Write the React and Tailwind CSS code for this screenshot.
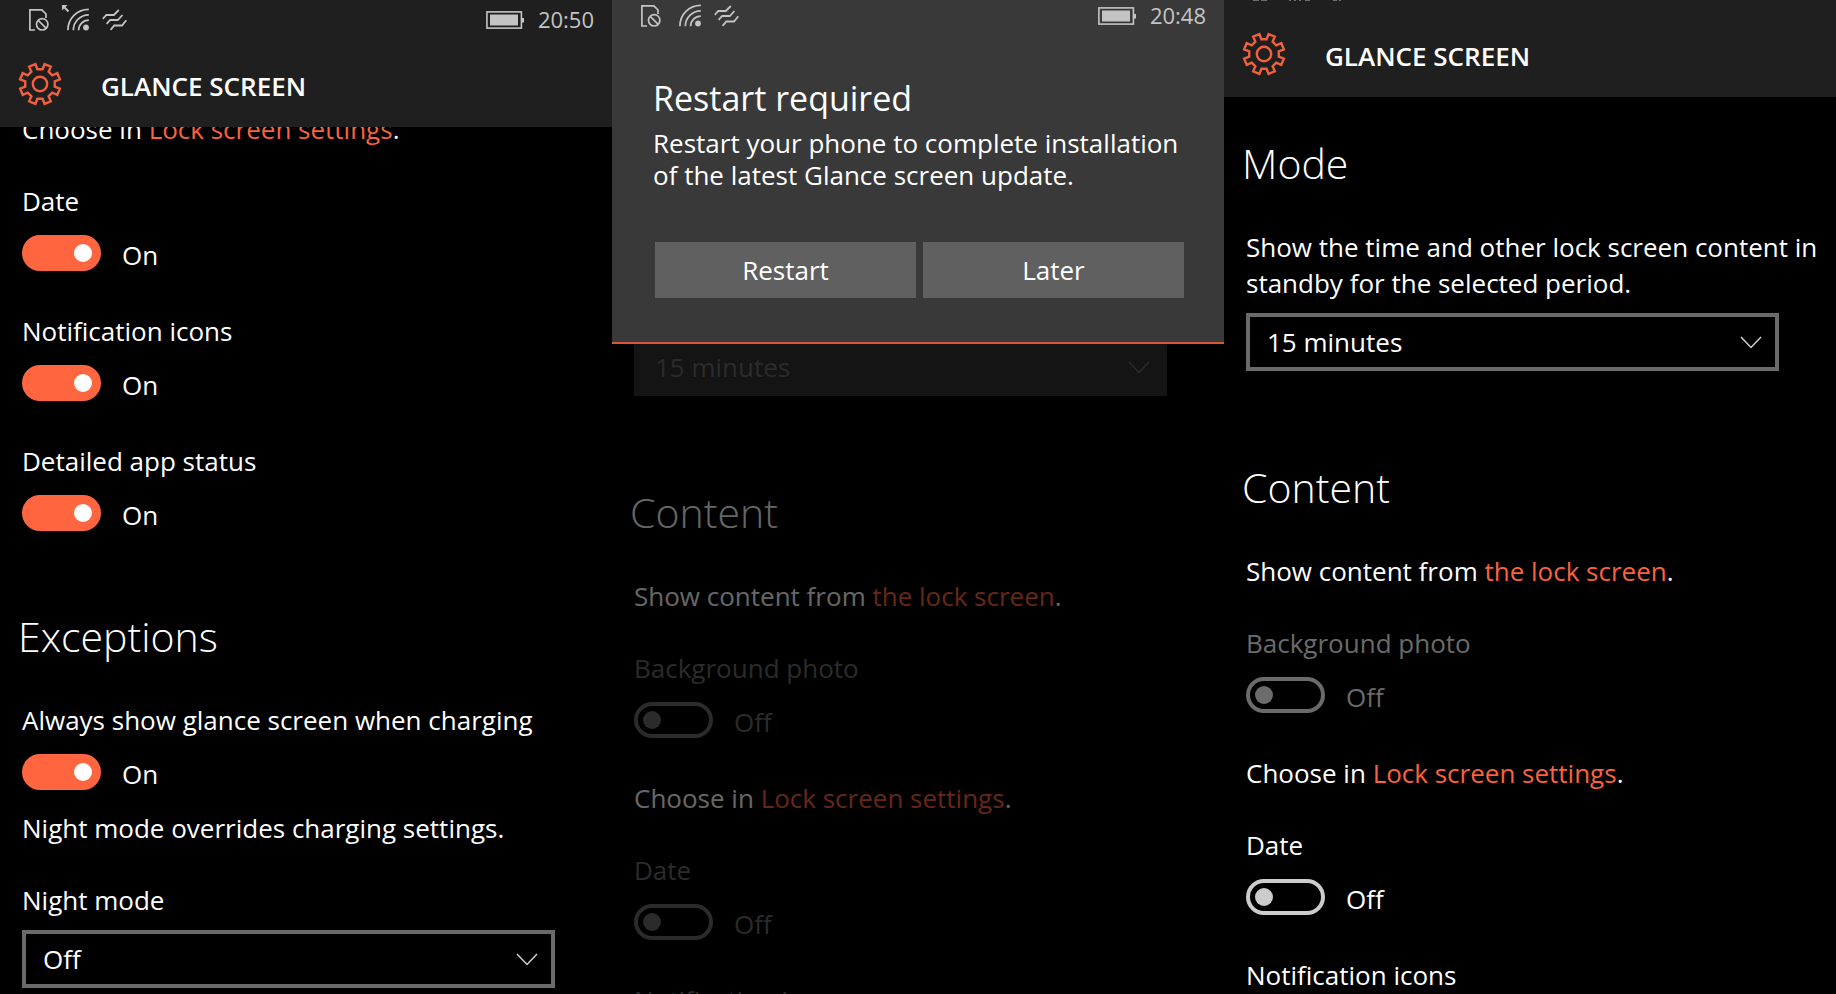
import { useState, useId } from 'react';

// Eight-tooth outline, built around the centre of a 44x44 box
const gearPath = (() => {
    const points = [];
    for (let i = 0; i < 8; i++) {
        [[20.4, -13], [15, -10], [15, 10], [20.4, 13]].forEach(([r, offset]) => {
            const angle = ((i * 45 + offset - 90) * Math.PI) / 180;
            points.push(`${(22 + r * Math.cos(angle)).toFixed(2)} ${(22 + r * Math.sin(angle)).toFixed(2)}`);
        });
    }
    return `M${points.join('L')}Z`;
})();

const GearIcon = () => (
    <svg viewBox="0 0 44 44" className="w-11 h-11 shrink-0" fill="none" stroke="#f0603c" strokeWidth="2.4" aria-hidden="true">
        <path d={gearPath} />
        <circle cx="22" cy="22" r="7.2" />
    </svg>
);

const SimIcon = () => (
    <svg viewBox="0 0 22 24" className="w-[22px] h-6" fill="none" stroke="currentColor" strokeWidth="1.7" aria-hidden="true">
        <path d="M7 22H1.9V1.9h12L18 6v4" />
        <circle cx="14.2" cy="16.3" r="5.7" />
        <path d="M10.2 12.3l8 8" />
    </svg>
);

const WifiIcon = ({ searching }) => (
    <svg viewBox="0 0 30 28" className="w-[30px] h-7" fill="none" stroke="currentColor" strokeWidth="1.7" aria-hidden="true">
        {searching && (
            <>
                <path d="M2.5 2.5l5 5" strokeWidth="2" />
                <path d="M1 1h5.5L1 6.5z" fill="currentColor" stroke="none" />
            </>
        )}
        <path d="M6.9 26.3C6.9 14.5 16 5.4 27.8 5.4" />
        <path d="M12.3 26.3c0-8.5 7-15.5 15.5-15.5" />
        <path d="M17.6 26.3c0-5.6 4.6-10.2 10.2-10.2" />
        <circle cx="25" cy="23.5" r="2.9" fill="currentColor" stroke="none" />
    </svg>
);

const VibrateIcon = () => (
    <svg viewBox="0 0 26 24" className="w-[26px] h-6" fill="none" stroke="currentColor" strokeWidth="1.8" aria-hidden="true">
        <path d="M.8 10.8L4.300 7h7.500L16.800 2" />
        <path d="M4.600 15.800L8.200 12h7.600l4.700-5" />
        <path d="M8.600 21.800l3.700-4.300H20l4.300-5.200" />
    </svg>
);

const BatteryIcon = () => (
    <svg viewBox="0 0 38 18" className="w-[38px] h-[18px]" fill="none" aria-hidden="true">
        <rect x="0.9" y="0.9" width="34.5" height="16.2" stroke="currentColor" strokeWidth="1.6" />
        <rect x="4" y="3.5" width="28" height="11" fill="currentColor" />
        <rect x="36" y="7" width="2" height="4.5" fill="currentColor" />
    </svg>
);

const ChevronIcon = () => (
    <svg viewBox="0 0 22 13" className="absolute right-[17px] top-1/2 -mt-1.5 w-[22px] h-[13px] pointer-events-none" fill="none" stroke="currentColor" strokeWidth="1.5" aria-hidden="true">
        <path d="M1 1l10 10.5L21 1" />
    </svg>
);

const StatusBar = ({ time, searching }) => (
    <div className="h-10 pl-7 pr-[18px] flex items-center justify-between text-[#c4c4c4]">
        <div className="flex items-center">
            <SimIcon />
            <div className="mx-[11px] pb-1">
                <WifiIcon searching={searching} />
            </div>
            <VibrateIcon />
        </div>
        <div className="flex items-center gap-[14px]">
            <BatteryIcon />
            <span className="text-[22px] leading-6 pb-0.5">{time}</span>
        </div>
    </div>
);

const TitleBar = () => (
    <div className="h-[87px] pl-[18px] flex items-center gap-[39px]">
        <GearIcon />
        <h1 className="pt-1 text-[26px] leading-9 font-semibold">GLANCE SCREEN</h1>
    </div>
);

const Heading = ({ children }) => (
    <h2 className="-ml-1 text-[41px] leading-[60px] font-light">{children}</h2>
);

const Toggle = ({ label, defaultOn = false, disabled = false }) => {
    const id = useId();
    const [on, setOn] = useState(defaultOn);

    return (
        <div className={disabled ? 'text-[#6b6b6b]' : ''}>
            <label htmlFor={id} className="block">{label}</label>
            <div className="mt-4 h-10 flex items-start gap-[21px]">
                <input
                    id={id}
                    type="checkbox"
                    checked={on}
                    disabled={disabled}
                    onChange={(e) => setOn(e.target.checked)}
                    className="appearance-none shrink-0 w-[79px] h-9 px-[5px] flex items-center rounded-full border-4 border-[#cccccc] text-[#cccccc] before:content-[''] before:w-[18px] before:h-[18px] before:rounded-full before:bg-current checked:justify-end checked:border-[#ff6640] checked:bg-[#ff6640] checked:text-white disabled:border-[#6b6b6b] disabled:text-[#6b6b6b]"
                />
                <span className="leading-10">{on ? 'On' : 'Off'}</span>
            </div>
        </div>
    );
};

const SelectBox = ({ label, options, disabled = false }) => (
    <div className={disabled ? 'relative mr-[45px] text-[#6b6b6b]' : 'relative mr-[45px] text-[#d0d0d0]'}>
        <select
            aria-label={label}
            disabled={disabled}
            className="appearance-none block w-full h-[58px] pl-[17px] pr-12 border-4 border-[#6a6a6a] bg-black text-white disabled:border-[#333333] disabled:bg-[#333333] disabled:text-[#6b6b6b] disabled:opacity-100"
        >
            {options.map(option => (
                <option key={option}>{option}</option>
            ))}
        </select>
        <ChevronIcon />
    </div>
);

const SettingsLink = ({ children }) => (
    <a href="#lock-screen" className="text-[#f9633e]">{children}</a>
);

const ContentSection = ({ dateDisabled = false }) => (
    <>
        <Heading>Content</Heading>
        <p className="mt-9">Show content from <SettingsLink>the lock screen</SettingsLink>.</p>
        <div className="mt-9">
            <Toggle label="Background photo" disabled />
        </div>
        <p className="mt-[38px]">Choose in <SettingsLink>Lock screen settings</SettingsLink>.</p>
        <div className="mt-9 flex flex-col gap-[38px]">
            <Toggle label="Date" disabled={dateDisabled} />
            <Toggle label="Notification icons" disabled={dateDisabled} />
        </div>
    </>
);

const durations = ['15 minutes', '30 minutes', 'Always on'];

const ExceptionsScreen = () => (
    <section className="flex-1 min-w-0 overflow-hidden">
        <header className="relative z-10 bg-[#1f1f1f]">
            <StatusBar time="20:50" searching />
            <TitleBar />
        </header>
        <div className="-mt-4 pl-[22px] pr-3">
            <p>Choose in <SettingsLink>Lock screen settings</SettingsLink>.</p>
            <div className="mt-9 flex flex-col gap-[38px]">
                <Toggle label="Date" defaultOn />
                <Toggle label="Notification icons" defaultOn />
                <Toggle label="Detailed app status" defaultOn />
            </div>
            <div className="mt-[71px]">
                <Heading>Exceptions</Heading>
            </div>
            <div className="mt-9">
                <Toggle label="Always show glance screen when charging" defaultOn />
            </div>
            <p className="mt-4">Night mode overrides charging settings.</p>
            <p className="mt-9 mb-3">Night mode</p>
            <SelectBox label="Night mode" options={['Off', 'On']} />
        </div>
    </section>
);

const RestartScreen = () => (
    <section className="flex-1 min-w-0 overflow-hidden">
        <div role="dialog" aria-labelledby="restart-title" className="relative z-10 bg-[#393939] border-b-2 border-[#d9573a]">
            {/* tails of the line that has scrolled off the top */}
            <svg viewBox="0 0 612 3" className="absolute top-0 left-0 w-full" fill="#f0603c" aria-hidden="true">
                <circle cx="115" cy="0" r="2.5" />
                <circle cx="201" cy="0" r="2.5" />
                <circle cx="239" cy="0" r="2.5" />
                <circle cx="264" cy="0" r="2.5" />
                <circle cx="290" cy="0" r="2.5" />
            </svg>
            <div className="-mt-1">
                <StatusBar time="20:48" />
            </div>
            <div className="pl-[41px] pr-10 pt-[39px] pb-11">
                <h2 id="restart-title" className="text-[34px] leading-[46px]">Restart required</h2>
                <p className="mt-1.5 leading-8">Restart your phone to complete installation of the latest Glance screen update.</p>
                <div className="mt-[51px] ml-0.5 flex gap-[7px]">
                    <button type="button" className="flex-1 h-14 bg-[#606060]">Restart</button>
                    <button type="button" className="flex-1 h-14 bg-[#606060]">Later</button>
                </div>
            </div>
        </div>
        <div className="-mt-1.5 pl-[22px] pr-3 opacity-40">
            <SelectBox label="Mode" options={durations} disabled />
            <div className="mt-[86px]">
                <ContentSection dateDisabled />
            </div>
        </div>
    </section>
);

const ModeScreen = () => (
    <section className="flex-1 min-w-0 overflow-hidden">
        <header className="relative pt-2.5 bg-[#1f1f1f]">
            <svg viewBox="0 0 612 2" className="absolute top-0 left-0 w-full" fill="#6e6e6e" aria-hidden="true">
                <path d="M29 0h6v1h-6zM37 0h6v1h-6zM65 0h2v1h-2zM70 0h2v1h-2zM75 0h2v1h-2zM81 0h5v1h-5zM109 0h4v1h-4zM115 0h2v1h-2z" />
            </svg>
            <TitleBar />
        </header>
        <div className="pl-[22px] pr-3 pt-9">
            <Heading>Mode</Heading>
            <p className="mt-9 mb-3">Show the time and other lock screen content in standby for the selected period.</p>
            <SelectBox label="Mode" options={durations} />
            <div className="mt-[86px]">
                <ContentSection />
            </div>
        </div>
    </section>
);

const App = () => {
    return (
        <main className="h-screen flex overflow-hidden bg-black text-white text-[26px] leading-9 font-['Open_Sans',sans-serif]">
            <ExceptionsScreen />
            <RestartScreen />
            <ModeScreen />
        </main>
    );
};

export default App;
